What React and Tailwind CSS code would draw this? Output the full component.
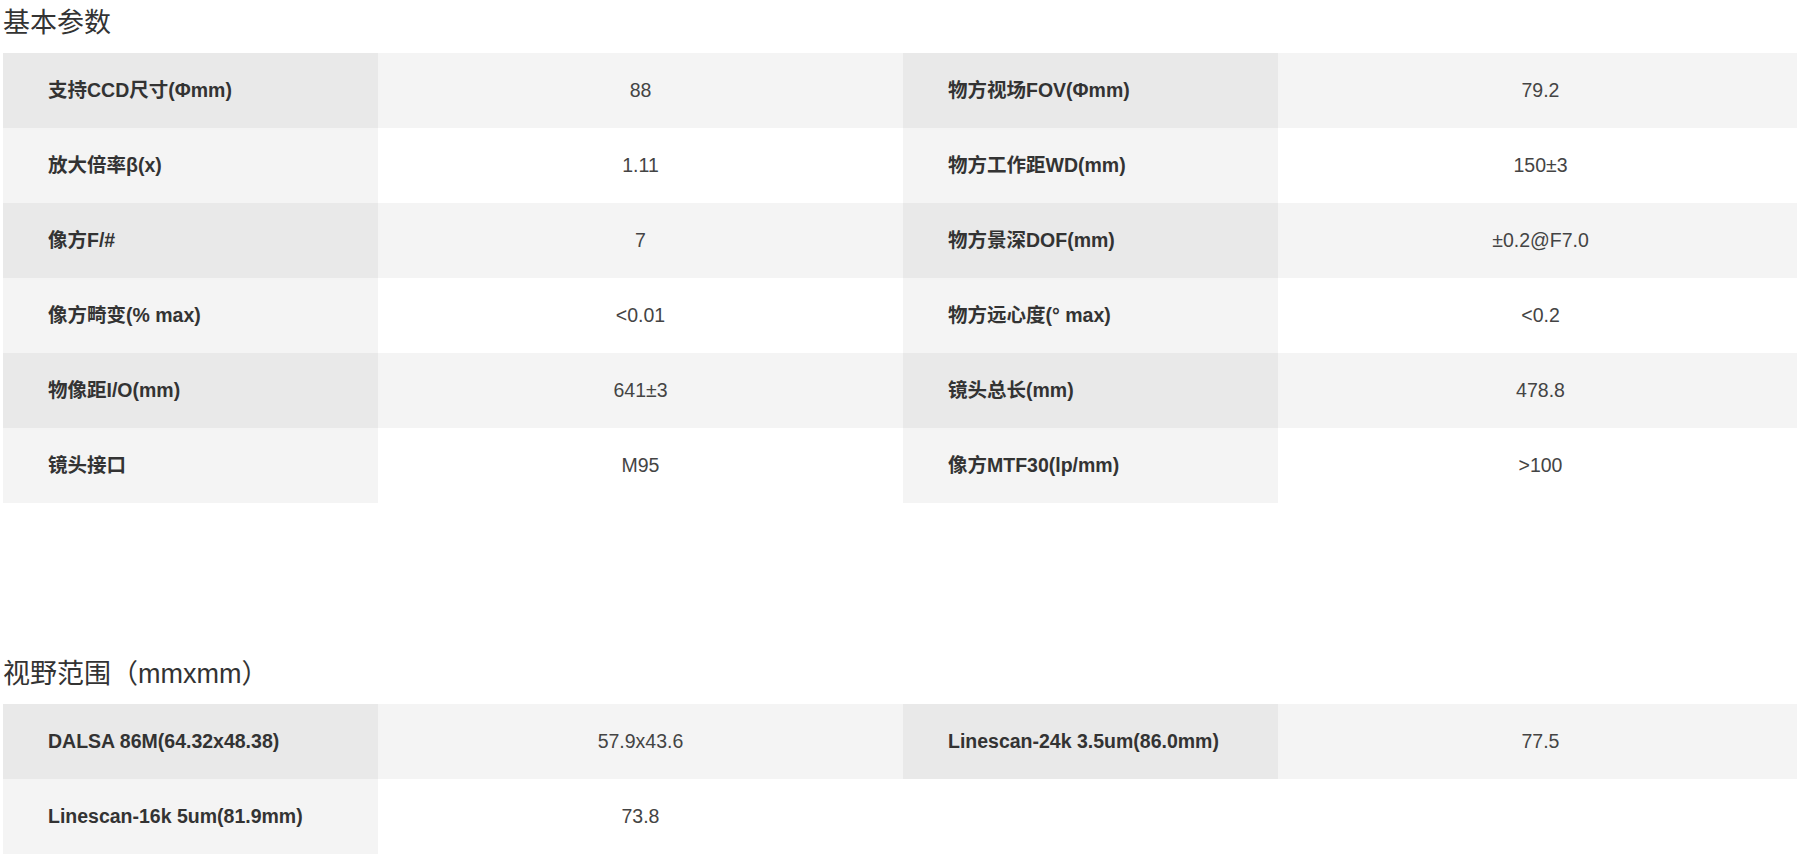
import React from "react";

const basic = [
  ["支持CCD尺寸(Φmm)", "88", "物方视场FOV(Φmm)", "79.2"],
  ["放大倍率β(x)", "1.11", "物方工作距WD(mm)", "150±3"],
  ["像方F/#", "7", "物方景深DOF(mm)", "±0.2@F7.0"],
  ["像方畸变(% max)", "<0.01", "物方远心度(° max)", "<0.2"],
  ["物像距I/O(mm)", "641±3", "镜头总长(mm)", "478.8"],
  ["镜头接口", "M95", "像方MTF30(lp/mm)", ">100"],
];

const fov = [
  ["DALSA 86M(64.32x48.38)", "57.9x43.6", "Linescan-24k 3.5um(86.0mm)", "77.5"],
  ["Linescan-16k 5um(81.9mm)", "73.8"],
];

const font = { fontFamily: '"Liberation Sans", "Noto Sans CJK SC", sans-serif' };

function Table({ rows }) {
  return (
    <div className="w-[1800px] ml-[3px] grid grid-cols-[375px_525px_375px_525px]">
      {rows.map((r, i) => {
        const odd = i % 2 === 0;
        const lab = odd ? "bg-[#e9e9e9]" : "bg-[#f4f4f4]";
        const val = odd ? "bg-[#f4f4f4]" : "bg-white";
        const cells = [];
        for (let c = 0; c < 4; c++) {
          const text = r[c];
          if (text === undefined) {
            cells.push(<div key={c} className="h-[75px] bg-white" />);
          } else if (c % 2 === 0) {
            cells.push(
              <div key={c} className={`h-[75px] ${lab} flex items-center pl-[45px] pt-[1px] text-[19.5px] font-bold text-[#333]`}>
                {text}
              </div>
            );
          } else {
            cells.push(
              <div key={c} className={`h-[75px] ${val} flex items-center justify-center pt-[1px] text-[19.5px] text-[#444]`}>
                {text}
              </div>
            );
          }
        }
        return <React.Fragment key={i}>{cells}</React.Fragment>;
      })}
    </div>
  );
}

function Title({ children }) {
  return (
    <div
      className="pl-[3px] pt-[2px] text-[27px] leading-[42px] h-[44px] mb-[9px] text-[#333] font-normal"
      style={{ fontFamily: '"Liberation Sans", "Noto Sans CJK SC", sans-serif' }}
    >
      {children}
    </div>
  );
}

export default function App() {
  return (
    <div className="w-full overflow-hidden bg-white h-[858px]" style={font}>
      <Title>基本参数</Title>
      <Table rows={basic} />
      <div className="h-[148px]" />
      <Title>视野范围（mmxmm）</Title>
      <Table rows={fov} />
    </div>
  );
}
